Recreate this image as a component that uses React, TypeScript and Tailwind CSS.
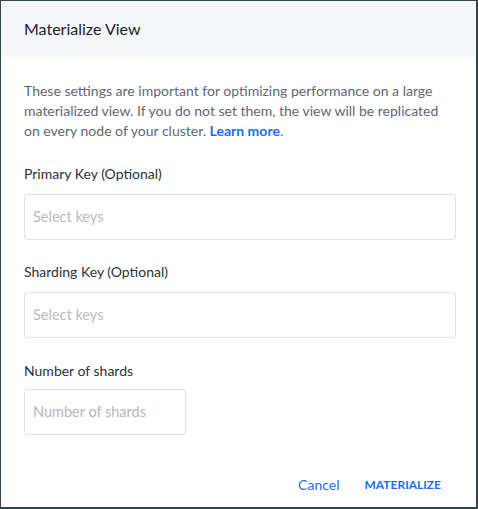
import React from "react";

export default function App() {
  return (
    <div className="w-[478px] h-[509px] bg-white border-t border-l border-r-2 border-b-2 border-[#34444d] flex flex-col" style={{ fontFamily: "Lato, 'Open Sans', sans-serif" }}>
      <div className="h-[56px] bg-[#f5f6f8] flex items-center px-[23px] shrink-0">
        <h1 className="text-[16px] text-[#1c2128] font-normal">Materialize View</h1>
      </div>
      <div className="flex-1 flex flex-col pl-[23px] pr-[20px] pt-[24px]">
        <p className="text-[14px] leading-[20px] text-[#5f6772] pr-[3px]">
          These settings are important for optimizing performance on a large materialized view. If you do not set them, the view will be replicated on every node of your cluster.{" "}
          <a className="text-[#1a6fe8] font-bold">Learn more</a>.
        </p>
        <label className="mt-[23px] text-[14px] leading-[20px] text-[#2b3038]">Primary Key (Optional)</label>
        <div className="mt-[10px] h-[46px] border border-[#dfe3e8] rounded-[3px] flex items-center px-[8px] text-[14.5px] text-[#b8bcc2]">Select keys</div>
        <label className="mt-[22px] text-[14px] leading-[20px] text-[#2b3038]">Sharding Key (Optional)</label>
        <div className="mt-[10px] h-[46px] border border-[#dfe3e8] rounded-[3px] flex items-center px-[8px] text-[14.5px] text-[#b8bcc2]">Select keys</div>
        <label className="mt-[23px] text-[14px] leading-[20px] text-[#2b3038]">Number of shards</label>
        <div className="mt-[8px] w-[162px] h-[46px] border border-[#dfe3e8] rounded-[3px] flex items-center px-[8px] text-[14.5px] text-[#b3b7bd]">Number of shards</div>
        <div className="mt-auto mb-[12px] flex justify-end items-center gap-[25px] pr-[15px]">
          <span className="text-[14px] text-[#1a6fe8]">Cancel</span>
          <span className="text-[12px] font-bold tracking-[0px] text-[#1a6fe8]">MATERIALIZE</span>
        </div>
      </div>
    </div>
  );
}
